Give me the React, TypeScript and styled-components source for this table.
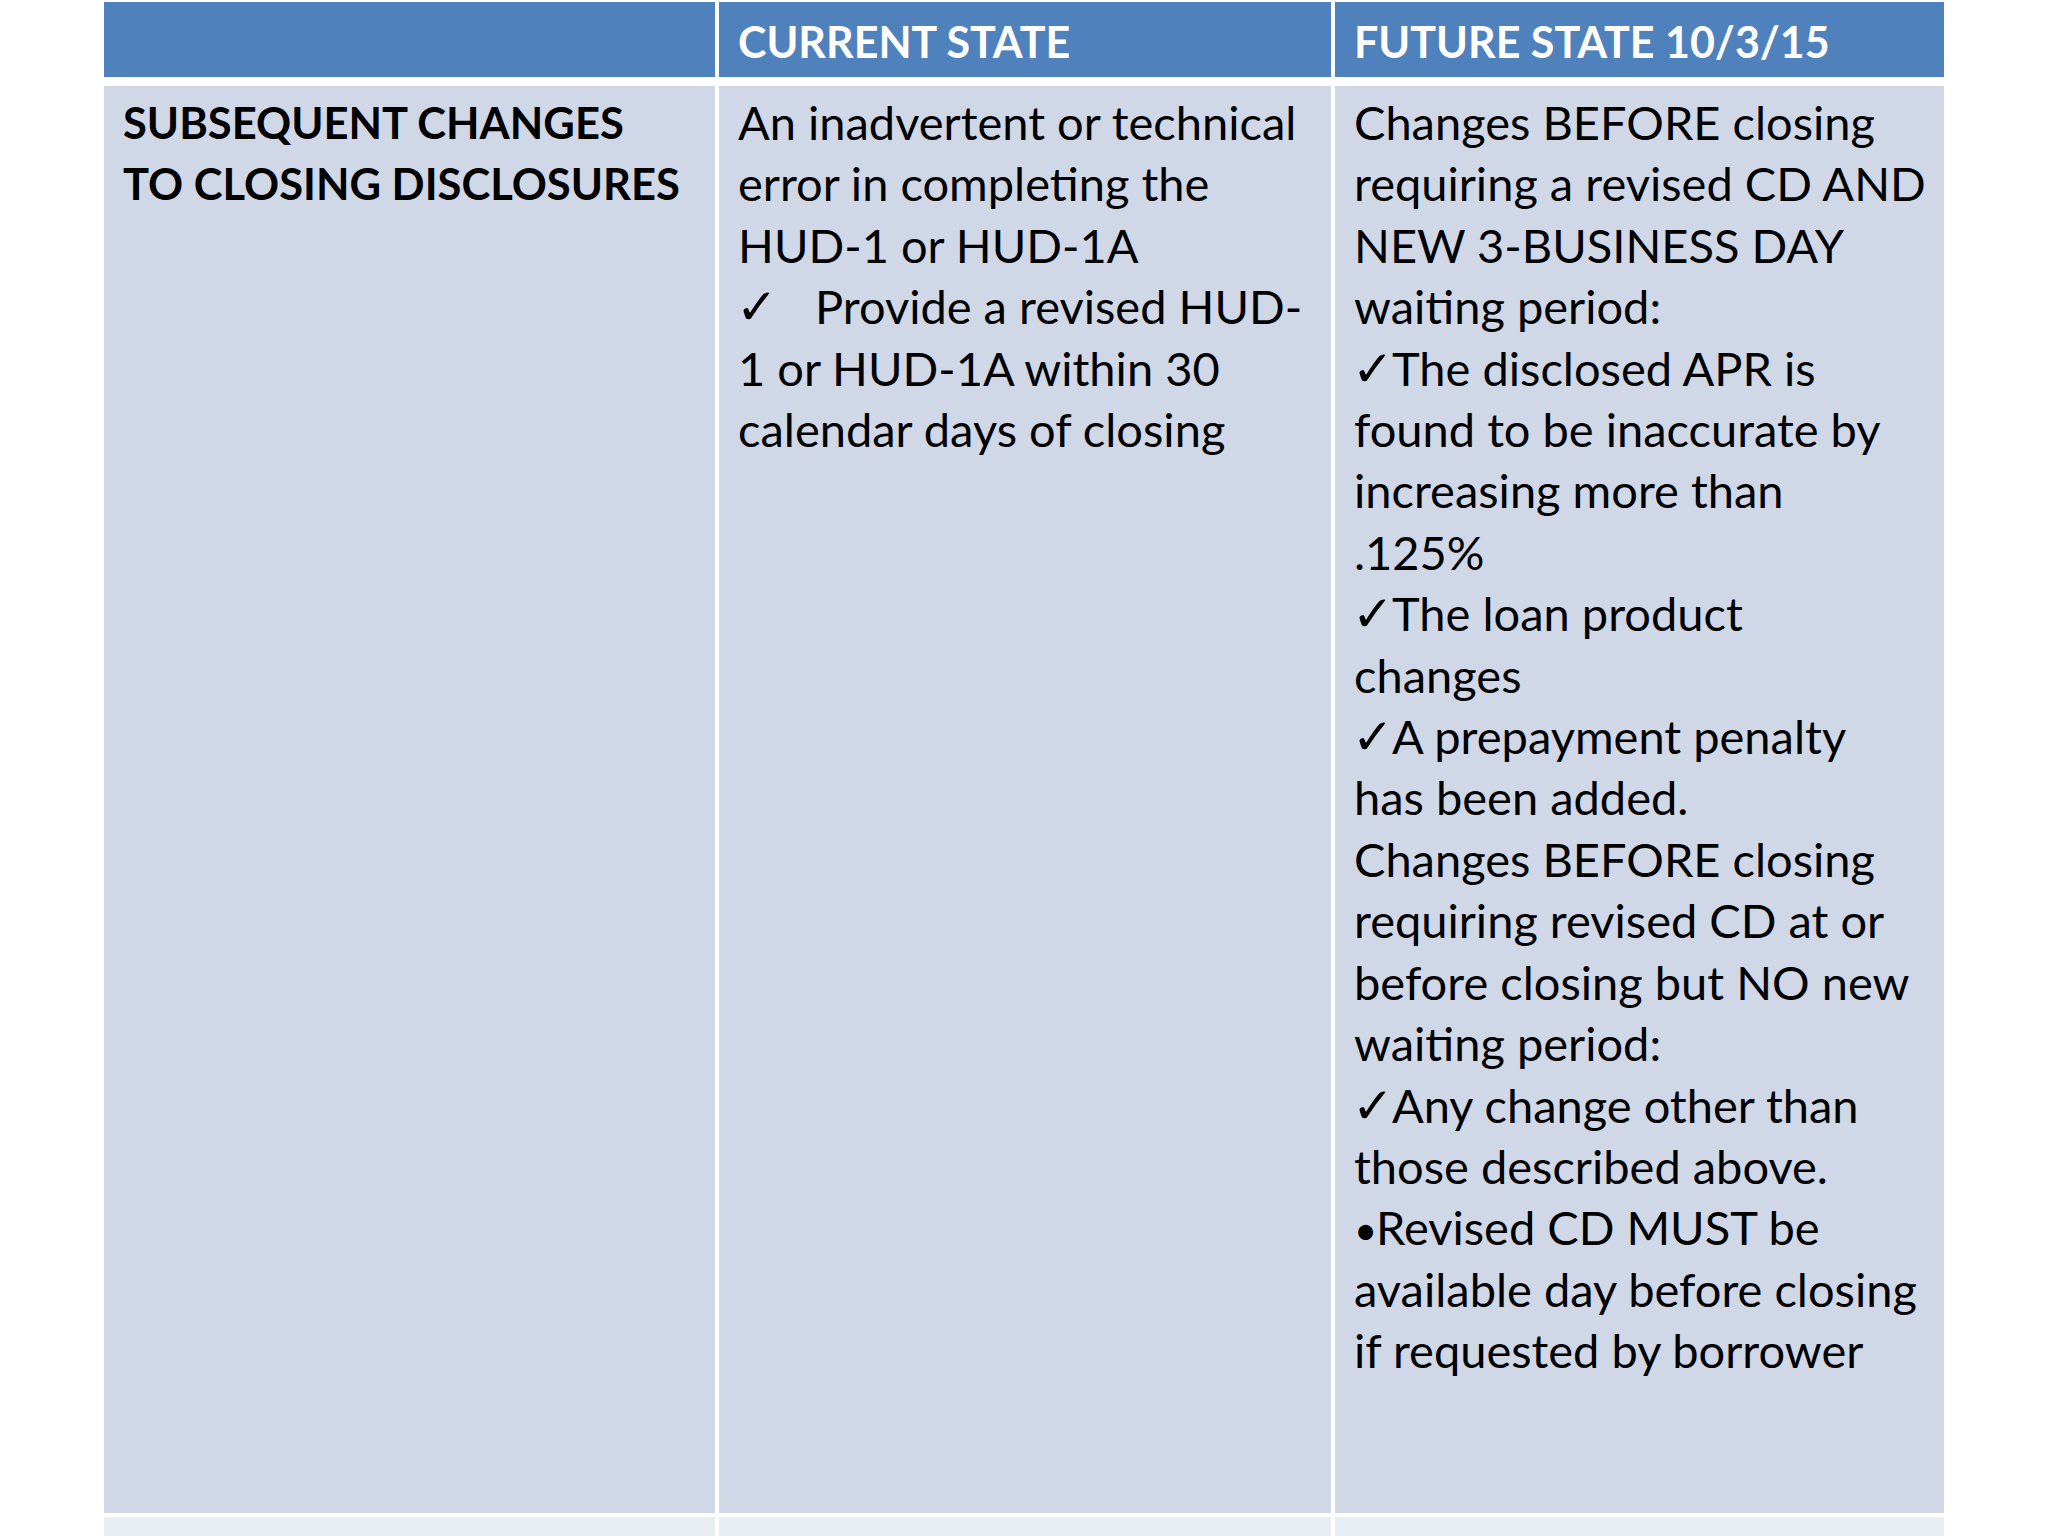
import React from "react";
import styled, { createGlobalStyle } from "styled-components";

const Global = createGlobalStyle`
  html, body {
    margin: 0;
    padding: 0;
    background: #ffffff;
  }
  body {
    font-family: Lato, "Liberation Sans", sans-serif;
    color: #000;
  }
`;

const Slide = styled.div`
  width: 2048px;
  height: 1536px;
  overflow: hidden;
  padding: 2px 104px 0 104px;
  box-sizing: border-box;
`;

const Table = styled.div`
  display: grid;
  grid-template-columns: 611px 612px 609px;
  grid-template-rows: 80px 1427px 40px;
  column-gap: 4px;
  row-gap: 4px;
  background: #ffffff;
`;

const HeadCell = styled.div`
  background: #4f81bd;
  color: #ffffff;
  font-weight: 700;
  font-size: 43px;
  line-height: 61px;
  padding: 9px 0 0 19px;
  white-space: nowrap;
  margin-bottom: 5px;
`;

const BodyCell = styled.div<{ $light?: boolean; $bold?: boolean }>`
  background: ${({ $light }) => ($light ? "#e9edf4" : "#d0d8e8")};
  font-size: ${({ $bold }) => ($bold ? "43.5px" : "47px")};
  font-weight: ${({ $bold }) => ($bold ? 700 : 400)};
  line-height: 61.4px;
  padding: 6px 0 0 19px;
  white-space: nowrap;
`;

const Line = styled.div`
  display: block;
`;

const Check = styled.span<{ $wide?: boolean }>`
  font-family: "DejaVu Sans", sans-serif;
  font-size: 50px;
  line-height: 1;
  display: inline-block;
  width: ${({ $wide }) => ($wide ? "77px" : "38px")};
  margin-left: -2px;
  margin-right: 2px;
`;

const Bullet = styled.span`
  display: inline-block;
  font-size: 40px;
  line-height: 1;
  width: 22px;
`;

const future: { text: string; mark?: "check" | "bullet" }[] = [
  { text: "Changes BEFORE closing" },
  { text: "requiring a revised CD AND" },
  { text: "NEW 3-BUSINESS DAY" },
  { text: "waiting period:" },
  { text: "The disclosed APR is", mark: "check" },
  { text: "found to be inaccurate by" },
  { text: "increasing more than" },
  { text: ".125%" },
  { text: "The loan product", mark: "check" },
  { text: "changes" },
  { text: "A prepayment penalty", mark: "check" },
  { text: "has been added." },
  { text: "Changes BEFORE closing" },
  { text: "requiring revised CD at or" },
  { text: "before closing but NO new" },
  { text: "waiting period:" },
  { text: "Any change other than", mark: "check" },
  { text: "those described above." },
  { text: "Revised CD MUST be", mark: "bullet" },
  { text: "available day before closing" },
  { text: "if requested by borrower" },
];

export default function App() {
  return (
    <>
      <Global />
      <Slide>
        <Table>
          <HeadCell />
          <HeadCell>CURRENT STATE</HeadCell>
          <HeadCell>FUTURE STATE 10/3/15</HeadCell>

          <BodyCell $bold>
            <Line>SUBSEQUENT CHANGES</Line>
            <Line>TO CLOSING DISCLOSURES</Line>
          </BodyCell>
          <BodyCell>
            <Line>An inadvertent or technical</Line>
            <Line>error in completing the</Line>
            <Line>HUD-1 or HUD-1A</Line>
            <Line>
              <Check $wide>✓</Check>Provide a revised HUD-
            </Line>
            <Line>1 or HUD-1A within 30</Line>
            <Line>calendar days of closing</Line>
          </BodyCell>
          <BodyCell>
            {future.map((l, i) => (
              <Line key={i}>
                {l.mark === "check" && <Check>✓</Check>}
                {l.mark === "bullet" && <Bullet>•</Bullet>}
                {l.text}
              </Line>
            ))}
          </BodyCell>

          <BodyCell $light />
          <BodyCell $light />
          <BodyCell $light />
        </Table>
      </Slide>
    </>
  );
}
